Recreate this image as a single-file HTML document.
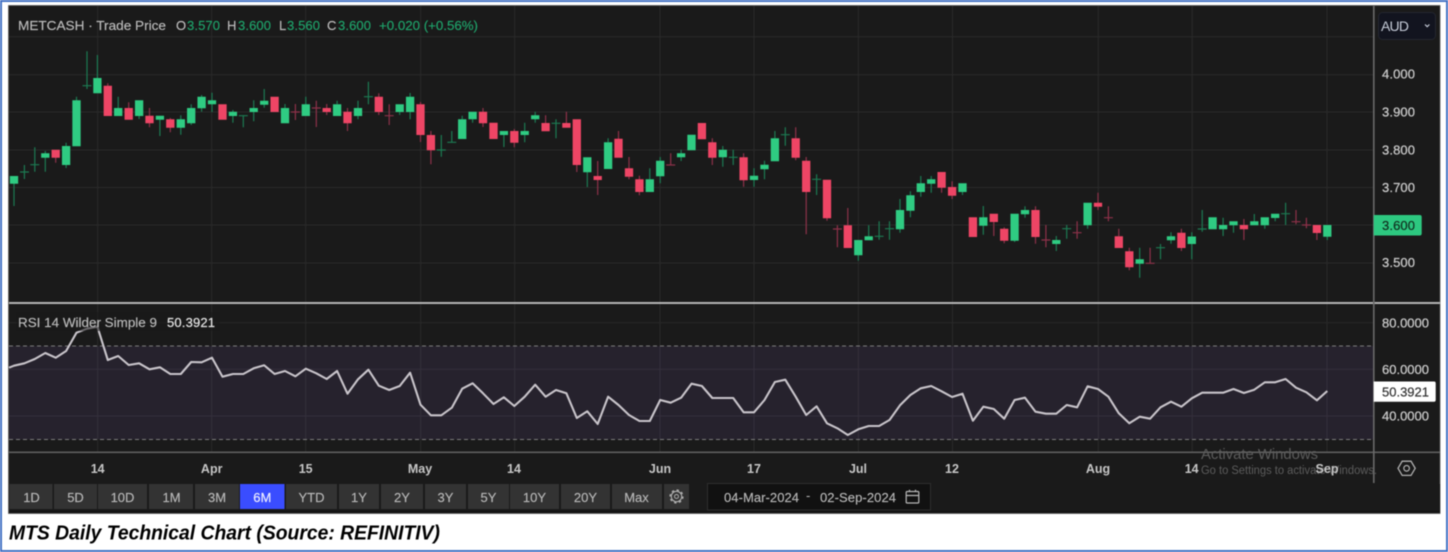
<!DOCTYPE html>
<html lang="en">
<head>
<meta charset="utf-8">
<title>MTS Daily Technical Chart</title>
<style>
html,body{margin:0;padding:0;background:#fff;width:1448px;height:552px;overflow:hidden}
svg{display:block;filter:blur(.45px)}
text{font-family:"Liberation Sans",sans-serif}
.ax{font-size:13px;fill:#cacaca;stroke:#cacaca;stroke-width:.25px}
.t{font-size:12.5px;font-weight:bold;fill:#c6c6c6;text-anchor:middle}
.b{font-size:13px;fill:#b8b8b8;stroke:#b8b8b8;stroke-width:.15px;text-anchor:middle}
.l{font-size:13px;fill:#bcbcbc;stroke:#bcbcbc;stroke-width:.15px}
.g{font-size:13px;fill:#1fa56c;stroke:#1fa56c;stroke-width:.15px}
</style>
</head>
<body>
<svg width="1448" height="552" viewBox="0 0 1448 552" xmlns="http://www.w3.org/2000/svg">
<rect width="1448" height="552" fill="#fff"/>
<path d="M1 1H1447V551H1V1Z" fill="none" stroke="#4472c4" stroke-width="2"/>
<rect x="8.5" y="5.5" width="1431.5" height="508" fill="#1a1a1a" stroke="#5a5a5a" stroke-width=".8"/>

<!-- RSI band -->
<rect x="9" y="346" width="1364.5" height="93.5" fill="#26222d"/>

<!-- grid -->
<path d="M9 36.7H1373M9 74.7H1373M9 112H1373M9 150H1373M9 187.5H1373M9 225H1373M9 263H1373" stroke="#2a2a2a" stroke-width="1" fill="none"/>
<path d="M97.7 6V452M211.7 6V452M305.7 6V452M420.7 6V452M514.7 6V452M660 6V452M754 6V452M858.4 6V452M952.5 6V452M1098.3 6V452M1192.2 6V452M1327 6V452" stroke="#2a2a2a" stroke-width="1" fill="none"/>
<path d="M9 322.7H1373" stroke="#282828" stroke-width="1" fill="none"/>
<path d="M9 369.3H1373M9 416H1373" stroke="#342f3c" stroke-width="1" fill="none"/>
<path d="M97.7 346V439M211.7 346V439M305.7 346V439M420.7 346V439M514.7 346V439M660 346V439M754 346V439M858.4 346V439M952.5 346V439M1098.3 346V439M1192.2 346V439M1327 346V439" stroke="#342f3c" stroke-width="1" fill="none"/>
<path d="M9 346H1373M9 439.5H1373" stroke="#7c7c7c" stroke-width="1" stroke-dasharray="4 3" fill="none"/>

<!-- green wicks -->
<path fill="none" stroke="#1c7a52" stroke-width="1.2" d="M14 176V206M24.4 165V179M34.8 147.3V171.7M45.3 151V171.7M66.1 142.7V168M76.5 96.7V146M87 51.3V89M97.4 55V78M118.2 96.7V108M139.1 116V119M159.9 119.7V136M180.8 115.3V134.7M191.2 104.3V125M201.6 95V111.7M212 92.7V112M232.9 110V122.7M243.3 115.7V127.3M253.7 100.3V121.3M264.2 89V107.7M285 104V108M305.8 96.7V116M337.1 100.7V104M358 100.7V119.3M368.4 81.7V104.3M399.7 112V115M410.1 93V119.3M441.3 135V156.7M451.8 131V142.3M462.2 115.7V119.3M472.6 119.3V122.7M503.9 135V147M524.7 122.7V142.3M535.2 111.7V122.7M556 119.3V138.3M587.3 172V187M608.1 138.3V142.3M649.8 168.3V179.3M660.2 157V183.3M681.1 149.7V161M722.8 146V166.7M733.2 149.7V165M754 168.3V186.7M764.5 160.7V179.3M774.9 131V138.3M785.3 127.3V145.7M816.6 174.3V195M858.3 255V260.7M868.7 225.3V236.3M879.1 221.3V239.7M889.5 221.3V239.7M900 199V232.7M910.4 191.3V217.3M920.8 176V196.7M931.2 176V192.7M962.5 192V195M983.3 206V234.7M1014.6 240V242M1025 206.3V217.7M1056.3 236V251M1066.7 225V238.7M1087.6 225V228.7M1139.7 247.7V277.7M1160.5 244V259.3M1171 232.3V243.7M1191.8 232.3V259.3M1202.2 210V231.7M1223.1 217.7V236M1233.5 225V232.7M1254.3 214V222M1264.8 225V228.7M1275.2 218V221.3M1285.6 202.7V225M1327.3 236V240M20 172h9M30.3 164.7h9M82.5 85.7h9M238.8 115.7h9M363.9 96.7h9M436.8 150h9M447.3 142.3h9M551.5 123.3h9M728.7 157.3h9M780.8 134.7h9M812.1 179.3h9M874.6 236.3h9M885 228.7h9M1062.2 228.7h9M1156 247.7h9M1197.7 229h9M1281.1 213.7h9"/>

<!-- red wicks -->
<path fill="none" stroke="#8d3149" stroke-width="1.2" d="M55.7 157V162.7M107.8 83.3V86M128.7 102.3V108M149.5 108V127.3M170.3 118V132.3M295.4 104V120M316.3 100.7V127M326.7 104V115M347.5 108V131M378.8 93.3V115M389.2 104.3V125M420.5 102V142M430.9 131V164.3M483 108V127M514.3 129V147.3M545.6 115.3V123M566.4 111.7V123M576.8 165V172M597.7 161V195M618.5 131V139M629 157V179.3M639.4 175.7V195.3M670.7 153.3V165M712.3 138.3V165M743.6 153.3V186.7M795.7 127.3V160.3M806.2 157V234.3M827 218V220.7M837.4 225.3V247.3M847.8 208V225.3M941.6 187V192.7M952.1 181.3V199M993.8 222V236M1004.2 227.3V243.3M1035.5 206.3V243.7M1045.9 225V247.3M1077.1 221.3V238.7M1098 192.7V210M1108.4 206.3V221.3M1118.8 228.7V236.3M1129.3 247.7V270.3M1150.1 247.7V263.3M1181.4 228.7V251M1243.9 219V240M1296 210V224.3M1306.4 217.7V228.3M1316.9 233V240M290.9 112h9M311.8 108h9M384.7 115.7h9M666.2 165h9M832.9 229h9M1041.4 240h9M1072.6 232.7h9M1103.9 217.7h9M1145.6 263.3h9M1291.5 221.7h9M1301.9 225h9"/>

<!-- green bodies -->
<path fill="none" stroke="#2fcb82" stroke-width="8.3" d="M14 176V183.7M45.3 153.3V157.7M66.1 146V165M76.5 100.3V146.3M97.4 78V93.3M118.2 108V116M139.1 100.3V116M159.9 115.7V119.7M180.8 119.3V127.7M191.2 108V123.3M201.6 96.7V108.3M212 100.3V104.3M232.9 111.7V116M253.7 108V112M264.2 100.7V104.7M285 108V123.3M305.8 104.3V116M337.1 104.3V116M358 108V116M399.7 104.3V112M410.1 96.7V112M462.2 119.3V139M472.6 111.7V119.3M503.9 131V135M524.7 131V135M535.2 115.3V119.3M587.3 157.3V172.3M608.1 142.3V169M649.8 179.3V192M660.2 160.7V176.3M681.1 153.3V157.3M691.5 134.7V150.3M722.8 149.7V157.3M754 175.7V180M764.5 164.7V169.3M774.9 138.3V161.3M858.3 240V255.3M868.7 236.3V240.3M900 210V229.3M910.4 195.3V210.7M920.8 183.3V192M931.2 179.3V183.7M962.5 183.3V192M983.3 217.3V225.7M1014.6 213.7V240.7M1025 210V214.3M1056.3 240V244M1087.6 202.7V225.3M1139.7 259.3V263.7M1171 236.3V240.3M1191.8 236.5V244M1212.6 217.3V229.3M1223.1 225V229.3M1233.5 221.3V225.3M1254.3 221.3V225.3M1264.8 217.3V225.3M1275.2 213.7V218M1327.3 225V236.7"/>

<!-- red bodies -->
<path fill="none" stroke="#ee4565" stroke-width="8.3" d="M55.7 149.7V157.7M107.8 85.7V116M128.7 108V119.7M149.5 115.7V123.3M170.3 119.3V127.7M222.5 104.3V119.7M274.6 96.7V112M326.7 108V112M347.5 111.7V123.3M378.8 96.7V112M420.5 104.3V135M430.9 135V150.3M483 111.7V123.3M493.5 122.7V139M514.3 131V142.7M545.6 123V131.3M566.4 123V127.7M576.8 119.3V165M597.7 176V180M618.5 138.7V157.7M629 168.3V176.7M639.4 179.3V192M701.9 123V139.3M712.3 142.3V157.7M743.6 157.3V180.3M795.7 138.3V157.7M806.2 160.7V192M827 179.7V218.3M847.8 225.3V248M941.6 172V187.7M952.1 187V195.7M972.9 217.3V237M993.8 213.7V222M1004.2 228.7V240.7M1035.5 210V237M1098 202.7V206.7M1118.8 236.3V248M1129.3 251.3V267.3M1181.4 232.7V248M1243.9 225V229.3M1316.9 225V233"/>

<!-- RSI line -->
<polyline fill="none" stroke="#c8c4ca" stroke-width="2.1" stroke-linejoin="round" points="9,367.7 14,365.7 24.4,363.3 34.8,359 45.3,353 55.7,357.7 66.1,351 76.5,332.7 87,328.7 97.4,326.7 107.8,360 118.2,356 128.7,365 139.1,363.3 149.5,369.3 159.9,367.3 170.3,374 180.8,374 191.2,362 201.6,362.3 212,357.7 222.5,376.7 232.9,374 243.3,374 253.7,368.3 264.2,365.3 274.6,374 285,371 295.4,376.3 305.8,368.7 316.3,373.3 326.7,379 337.1,371 347.5,393.7 358,379.3 368.4,369.7 378.8,385.7 389.2,390 399.7,386 410.1,372.7 420.5,404.7 430.9,415.3 441.3,415.3 451.8,407.7 462.2,388.7 472.6,383.3 483,393.3 493.5,404 503.9,397.3 514.3,406 524.7,396.7 535.2,384.7 545.6,396.7 556,390 566.4,393.3 576.8,418 587.3,411.3 597.7,424 608.1,396.7 618.5,405 629,415 639.4,421 649.8,421 660.2,400 670.7,402.7 681.1,397.7 691.5,383.7 701.9,386 712.3,398 722.8,398 733.2,398 743.6,412.3 754,412.3 764.5,400 774.9,382 785.3,379.7 795.7,396.7 806.2,415 816.6,406.3 827,423.3 837.4,428.3 847.8,435 858.3,429.3 868.7,426 879.1,426 889.5,420 900,405.3 910.4,395 920.8,388.3 931.2,386 941.6,391.3 952.1,397 962.5,393.7 972.9,420.7 983.3,406.7 993.8,409 1004.2,418.7 1014.6,400 1025,397.7 1035.5,411.7 1045.9,413.7 1056.3,413.7 1066.7,405 1077.1,407.3 1087.6,386.3 1098,389 1108.4,396.7 1118.8,413.3 1129.3,423.3 1139.7,416.7 1150.1,418.7 1160.5,407.3 1171,401.7 1181.4,406.7 1191.8,398.3 1202.2,392.7 1212.6,392.7 1223.1,392.7 1233.5,389 1243.9,393 1254.3,389.7 1264.8,382.3 1275.2,382.3 1285.6,379 1296,387.7 1306.4,392.3 1316.9,400.3 1327.3,391"/>
<rect x="16" y="312" width="204" height="19" fill="#1a1a1a" opacity=".55"/>

<!-- separators -->
<rect x="9" y="302" width="1431" height="2" fill="#b4b4b4"/>
<rect x="9" y="451.5" width="1431" height="1.6" fill="#5e5e5e"/>
<rect x="1373" y="6" width="1.6" height="477" fill="#6a6a6a"/>

<!-- legend -->
<text x="18" y="30" class="l" textLength="148" lengthAdjust="spacingAndGlyphs">METCASH · Trade Price</text>
<text x="176" y="30" class="l">O</text><text x="187" y="30" class="g" textLength="33">3.570</text>
<text x="227" y="30" class="l">H</text><text x="238" y="30" class="g" textLength="33">3.600</text>
<text x="279" y="30" class="l">L</text><text x="287" y="30" class="g" textLength="33">3.560</text>
<text x="327" y="30" class="l">C</text><text x="338" y="30" class="g" textLength="33">3.600</text>
<text x="379" y="30" class="g" textLength="99" lengthAdjust="spacingAndGlyphs">+0.020 (+0.56%)</text>
<text x="18" y="327" class="l" textLength="139" lengthAdjust="spacingAndGlyphs">RSI 14 Wilder Simple 9</text>
<text x="167" y="327" style="font-size:13px;fill:#e4e4e4;stroke:#e4e4e4;stroke-width:.2px" textLength="48">50.3921</text>

<!-- AUD -->
<rect x="1378.5" y="12.5" width="57" height="27" rx="4" fill="#12141f" stroke="#23262f"/>
<text x="1381" y="31" style="font-size:14px;fill:#c6ccd8" textLength="28">AUD</text>
<path d="M1425 24.5l2.2 2.2 2.2-2.2" fill="none" stroke="#c6ccd8" stroke-width="1.2"/>

<!-- price axis -->
<text x="1382" y="78.5" class="ax" textLength="33">4.000</text>
<text x="1382" y="116.5" class="ax" textLength="33">3.900</text>
<text x="1382" y="154.5" class="ax" textLength="33">3.800</text>
<text x="1382" y="192" class="ax" textLength="33">3.700</text>
<text x="1382" y="267" class="ax" textLength="33">3.500</text>
<path d="M1373.7 215H1419.7a2 2 0 0 1 2 2V233.5a2 2 0 0 1-2 2H1373.7Z" fill="#2dc880"/>
<text x="1382" y="230" style="font-size:13px;fill:#10301f;stroke:#10301f;stroke-width:.2px" textLength="33">3.600</text>

<!-- RSI axis -->
<text x="1382" y="327.5" class="ax" textLength="47">80.0000</text>
<text x="1382" y="374" class="ax" textLength="47">60.0000</text>
<text x="1382" y="420.5" class="ax" textLength="47">40.0000</text>
<path d="M1373.7 381.5H1434a1.7 1.7 0 0 1 1.7 1.7V400a1.7 1.7 0 0 1-1.7 1.7H1373.7Z" fill="#fff"/>
<text x="1382" y="396.5" style="font-size:13px;fill:#333;stroke:#333;stroke-width:.2px" textLength="47">50.3921</text>

<!-- Windows watermark -->
<text x="1201" y="459" style="font-size:14.5px;fill:#5c5c5c" textLength="117" lengthAdjust="spacingAndGlyphs">Activate Windows</text>
<text x="1201" y="474" style="font-size:11.5px;fill:#5c5c5c" textLength="176" lengthAdjust="spacingAndGlyphs">Go to Settings to activate Windows.</text>

<!-- time axis -->
<text x="97.7" y="473" class="t">14</text>
<text x="211.7" y="473" class="t">Apr</text>
<text x="305.7" y="473" class="t">15</text>
<text x="420" y="473" class="t">May</text>
<text x="514" y="473" class="t">14</text>
<text x="660" y="473" class="t">Jun</text>
<text x="754" y="473" class="t">17</text>
<text x="858" y="473" class="t">Jul</text>
<text x="952" y="473" class="t">12</text>
<text x="1098" y="473" class="t">Aug</text>
<text x="1191.7" y="473" class="t">14</text>
<text x="1327" y="473" class="t">Sep</text>
<path d="M1398 468.3L1402.2 461.2H1411L1415.2 468.3L1411 475.4H1402.2Z" fill="none" stroke="#b0b0b0" stroke-width="1.3"/>
<circle cx="1406.6" cy="468.3" r="2.8" fill="none" stroke="#b0b0b0" stroke-width="1.2"/>

<!-- buttons -->
<rect x="9" y="484" width="1431" height="29" fill="#1a1a1a"/>
<path d="M9 510.5H1440V513H9Z" fill="#141414"/>
<g fill="#333">
<rect x="9.5" y="484" width="43" height="25"/><rect x="54" y="484" width="43" height="25"/><rect x="98" y="484" width="49" height="25"/><rect x="149" y="484" width="44" height="25"/><rect x="195" y="484" width="44" height="25"/><rect x="286" y="484" width="51" height="25"/><rect x="339" y="484" width="40" height="25"/><rect x="381" y="484" width="42" height="25"/><rect x="425" y="484" width="41" height="25"/><rect x="468" y="484" width="41" height="25"/><rect x="510" y="484" width="49" height="25"/><rect x="561" y="484" width="49" height="25"/><rect x="612" y="484" width="50" height="25"/><rect x="664" y="484" width="25" height="25"/>
</g>
<rect x="240" y="484" width="44.5" height="25" fill="#3a4dff"/>
<text x="31.5" y="502" class="b">1D</text>
<text x="75.5" y="502" class="b">5D</text>
<text x="122.5" y="502" class="b">10D</text>
<text x="171.5" y="502" class="b">1M</text>
<text x="217" y="502" class="b">3M</text>
<text x="262.3" y="502" class="b" style="fill:#f0f0ff;stroke:#f0f0ff">6M</text>
<text x="311.5" y="502" class="b">YTD</text>
<text x="359" y="502" class="b">1Y</text>
<text x="402" y="502" class="b">2Y</text>
<text x="445.5" y="502" class="b">3Y</text>
<text x="488.5" y="502" class="b">5Y</text>
<text x="534.5" y="502" class="b">10Y</text>
<text x="585.5" y="502" class="b">20Y</text>
<text x="636.5" y="502" class="b">Max</text>
<circle cx="676.5" cy="496.5" r="5.2" fill="none" stroke="#b0b0b0" stroke-width="1.1"/>
<circle cx="676.5" cy="496.5" r="6.4" fill="none" stroke="#b0b0b0" stroke-width="1.4" stroke-dasharray="2.4 2.6"/>
<circle cx="676.5" cy="496.5" r="2" fill="none" stroke="#b0b0b0" stroke-width="1"/>

<!-- date range -->
<rect x="707.5" y="483.5" width="223" height="26.5" fill="#111" stroke="#2e2e2e"/>
<text x="724" y="502" style="font-size:13px;fill:#b8b8b8;stroke:#b8b8b8;stroke-width:.15px" textLength="75">04-Mar-2024</text>
<text x="806" y="500" style="font-size:13px;fill:#b8b8b8">-</text>
<text x="820" y="502" style="font-size:13px;fill:#b8b8b8;stroke:#b8b8b8;stroke-width:.15px" textLength="76">02-Sep-2024</text>
<rect x="906.2" y="491.5" width="12.6" height="11.5" rx="1" fill="none" stroke="#b8b8b8" stroke-width="1.2"/>
<path d="M906.2 495.5H918.8M909.5 489.8V492M915.5 489.8V492" fill="none" stroke="#b8b8b8" stroke-width="1.2"/>

<!-- caption -->
<text x="9" y="539.5" style="font-size:20px;font-weight:bold;font-style:italic;fill:#000" textLength="431" lengthAdjust="spacingAndGlyphs">MTS Daily Technical Chart (Source: REFINITIV)</text>
</svg>
</body>
</html>
